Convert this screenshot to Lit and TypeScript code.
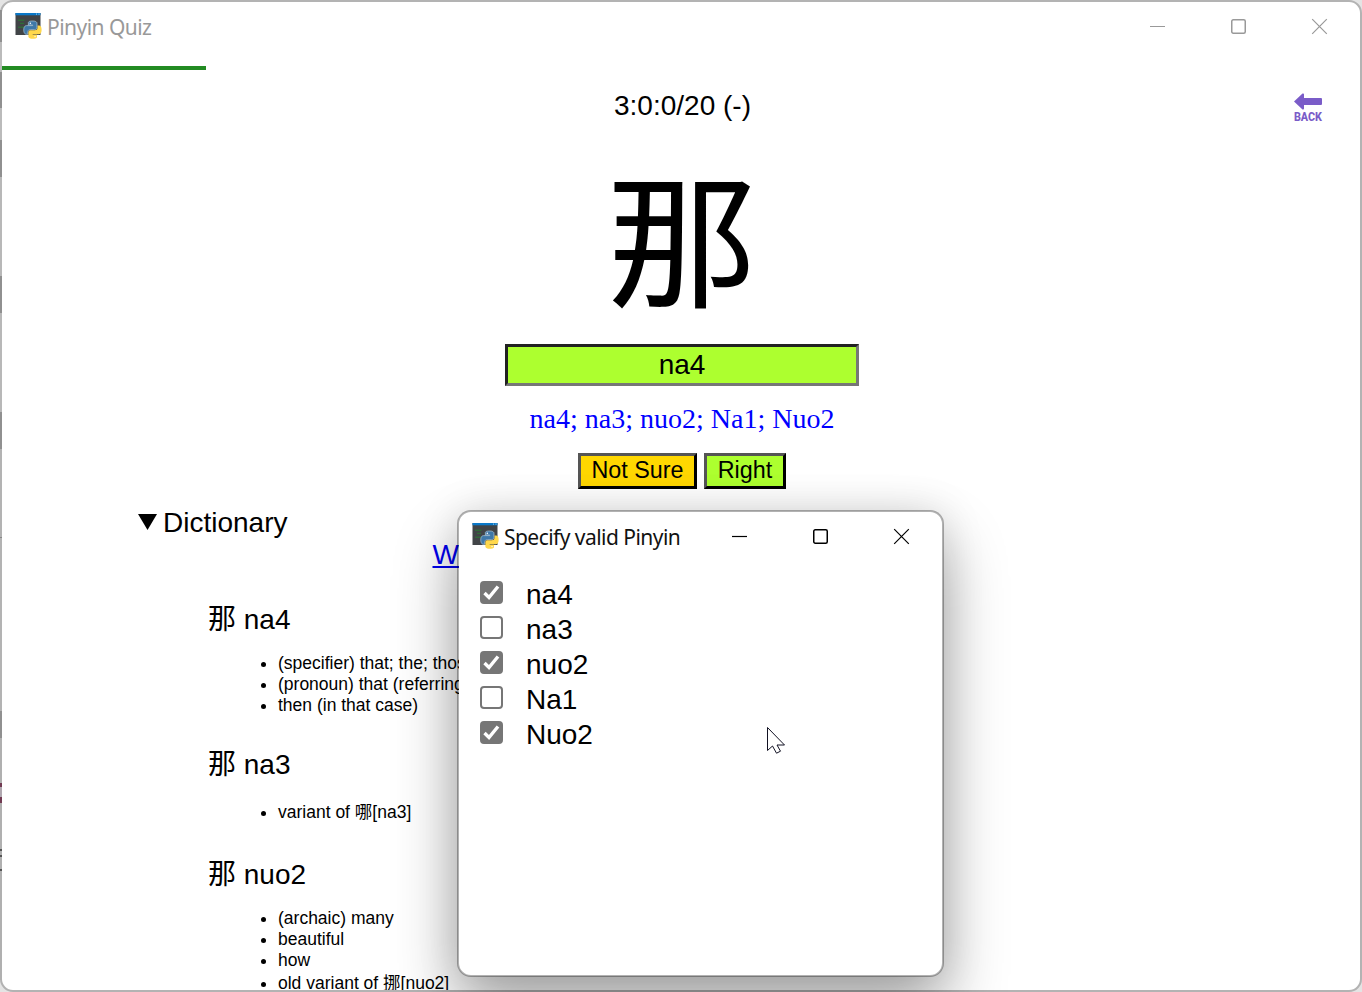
import { LitElement, html, css, svg } from "lit";
import { customElement, property } from "lit/decorators.js";
import { classMap } from "lit/directives/class-map.js";

const snake = "M14.25.18l.9.2.73.26.59.3.45.32.34.34.25.34.16.33.1.3.04.26.02.2-.01.13V8.5l-.05.63-.13.55-.21.46-.26.38-.3.31-.33.25-.35.19-.35.14-.33.1-.3.07-.26.04-.21.02H8.77l-.69.05-.59.14-.5.22-.41.27-.33.32-.27.35-.2.36-.15.37-.1.35-.07.32-.04.27-.02.21v3.06H3.17l-.21-.03-.28-.07-.32-.12-.35-.18-.36-.26-.36-.36-.35-.46-.32-.59-.28-.73-.21-.88-.14-1.05-.05-1.23.06-1.22.16-1.04.24-.87.32-.71.36-.57.4-.44.42-.33.42-.24.4-.16.36-.1.32-.05.24-.01h.16l.06.01h8.16v-.83H6.18l-.01-2.75-.02-.37.05-.34.11-.31.17-.28.25-.26.31-.23.38-.2.44-.18.51-.15.58-.12.64-.1.71-.06.77-.04.84-.02 1.27.05z";

@customElement("python-icon")
class PythonIcon extends LitElement {
  static styles = css`:host { display: block; width: 27px; height: 27px; } svg { display: block; }`;
  render() {
    return html`<svg width="27" height="27" viewBox="0 0 27 27">
      <rect x="0.500" y="0" width="25" height="22" fill="#414447"/>
      <rect x="0.500" y="0" width="25" height="2.300" fill="#0a78c8"/>
      <path d="M21 1.100h1M23.500 1.100h1" stroke="#9fd0f0" stroke-width="1"/>
      <path d="M3 7.200h6.500M5 10.300h4M3 14.200h6.500" stroke="#2b7a33" stroke-width="1"/>
      <g transform="translate(8.800 8) scale(.74)">
        <path d=${snake} fill="#3f78a8" stroke="#a9c4d8" stroke-width="1"/>
        <path d=${snake} fill="#ffd84c" transform="rotate(180 12 12)"/>
        <circle cx="8.800" cy="3" r="1.100" fill="#fff"/><circle cx="15.200" cy="21" r="1.100" fill="#fff7d0"/>
      </g>
    </svg>`;
  }
}

@customElement("window-bar")
class WindowBar extends LitElement {
  @property() label = "";
  @property() tone = "#000";
  @property() ink = "#000";
  static styles = css`
    :host { display: flex; flex: none; align-items: flex-start; height: 52px; box-sizing: border-box; padding: 0 32px 0 13px; }
    python-icon { margin-top: 11px; flex: none; }
    .label { margin: 11px 0 0 5px; flex: 1; font: 21px/28px "Noto Sans", sans-serif; white-space: nowrap; letter-spacing: -0.540px; }
    .controls { display: flex; gap: 64px; margin-top: 16px; }
    svg { display: block; width: 17px; height: 17px; fill: none; stroke-width: 1.200; }
  `;
  render() {
    return html`<python-icon></python-icon><div class="label" style="color:${this.tone}">${this.label}</div>
      <div class="controls" style="color:${this.ink}">
        ${[svg`<path d="M1 8.500h15"/>`, svg`<rect x="1.750" y="1.750" width="13.500" height="13.500" rx="1.500" stroke-width="1.500"/>`, svg`<path d="M1.200 1.200l14.600 14.600M15.800 1.200L1.200 15.800"/>`].map(
          (p) => html`<svg viewBox="0 0 17 17" stroke="currentColor">${p}</svg>`)}
      </div>`;
  }
}

const entries = [
  { head: "na4", cls: "first", items: ["(specifier) that; the; those", "(pronoun) that (referring", "then (in that case)"] },
  { head: "na3", cls: "second", items: ["variant of 哪[na3]"] },
  { head: "nuo2", cls: "third", items: ["(archaic) many", "beautiful", "how", "old variant of 挪[nuo2]"] },
];
const choices: [string, boolean][] = [["na4", true], ["na3", false], ["nuo2", true], ["Na1", false], ["Nuo2", true]];

@customElement("app-root")
class AppRoot extends LitElement {
  static styles = css`
    :host { display: block; position: relative; width: 1362px; height: 992px; overflow: hidden; background: #e4e4e4;
      font-family: "Liberation Sans", "Noto Sans CJK SC", sans-serif; color: #000; }
    * { box-sizing: border-box; }
    .window { width: 1362px; height: 992px; border: 2px solid #b3b3b3; border-radius: 13px; background: #fff; overflow: hidden; display: flex; flex-direction: column; }
    .edge { position: absolute; left: 0; top: 10px; width: 2px; height: 970px;
      background: linear-gradient(#909090 0 32px, #bbb 32px 62px, #909090 62px 98px, #bbb 98px 130px, #909090 130px 167px, #b8b8b8 167px 266px, #909090 266px 303px, #b8b8b8 303px 402px, #909090 402px 439px, #b3b3b3 439px 527px, #888 527px 528px, #b3b3b3 528px 701px, #909090 701px 728px, #b0b0b0 728px 773px, #713a52 773px 777px, #b0a8b0 777px 787px, #713a52 787px 793px, #b0b0b0 793px 839px, #555 839px 841px, #b0b0b0 841px 845px, #555 845px 847px, #b0b0b0 847px 859px, #555 859px 861px, #b0b0b0 861px); }
    .progress { height: 4px; width: 204px; background: #228b22; margin-top: 12px; flex: none; }
    .quiz { display: flex; flex-direction: column; align-items: center; height: 421px; flex: none; padding-left: 2px; }
    .top { display: grid; grid-template-columns: 1fr auto 1fr; align-self: stretch; padding: 20px 36.500px 0 37.500px; height: 62px; flex: none; }
    .score { font-size: 28px; line-height: 32px; }
    .back { justify-self: end; display: flex; flex-direction: column; align-items: center; width: 31px; margin-top: 3px; color: #7a5cc8; }
    .back svg { display: block; flex: none; }
    .back span { font: 800 13px/12px Roboto, sans-serif; margin-top: 1px; transform: scaleX(.83); }
    .glyph { font: 140px/160px "Noto Sans CJK SC", sans-serif; height: 160px; margin-top: 22px; flex: none; transform: scale(1.08, 1.04); }
    .answer { width: 354px; height: 42px; margin-top: 30px; flex: none; border: 3px solid; border-color: #222 #767676 #767676 #222; background: #adff2f; text-align: center; font-size: 28px; line-height: 35px; }
    .valid { color: #00f; font: 28px/32px "Liberation Serif", serif; margin-top: 17px; }
    .buttons { display: flex; gap: 7px; margin-top: 18px; }
    .btn { height: 36px; border: 3px solid; border-color: #555 #000 #000 #555; font-size: 23.333px; line-height: 28px; text-align: center; padding: 0; }
    .unsure { width: 119px; background: #ffd700; } .right { width: 82px; background: #adff2f; }
    .dict { padding-left: 136px; margin-top: 16px; display: flex; flex-direction: column; }
    .summary { display: flex; align-items: center; gap: 6px; font-size: 28px; line-height: 32px; }
    .summary svg { margin-bottom: 2px; }
    .link { color: #00e; text-decoration: underline; font-size: 28px; line-height: 32px; margin-left: 294.500px; }
    .entry { padding-left: 70px; display: flex; flex-direction: column; }
    .head { font-size: 28px; line-height: 38px; height: 38px; white-space: nowrap; }
    .first { margin-top: 30px; } .second { margin-top: 30px; } .third { margin-top: 31px; }
    .defs { list-style: none; margin: 14px 0 0; padding: 0 0 0 53px; font-size: 17.500px; line-height: 21px; }
    .second .defs { margin-top: 16px; } .third .defs { margin-top: 14px; }
    .defs li { display: flex; gap: 12px; align-items: center; height: 21px; white-space: nowrap; }
    .defs li::before { content: ""; width: 5px; height: 5px; border-radius: 50%; background: #000; margin-top: 2px; }
    .second .defs li { height: 25px; } .third .defs li:nth-child(4) { height: 25px; }
    .dialog { position: absolute; left: 457px; top: 510px; width: 487px; height: 467px; border: 2px solid rgba(0,0,0,.3); border-radius: 14px; background: #fff; background-clip: padding-box;
      box-shadow: 0 32px 64px rgba(0,0,0,.33), 0 2px 42px rgba(0,0,0,.13); }
    .choices { display: flex; flex-direction: column; padding: 13px 0 0 21px; }
    .choice { display: flex; height: 35px; gap: 23px; align-items: flex-start; font-size: 28px; line-height: 35px; }
    .box { width: 23px; height: 23px; margin-top: 4px; border: 2px solid #767676; border-radius: 4px; background: #fff; }
    .on { background: #767676; }
    .box svg { display: block; margin: -2px; }
    .cursor { position: absolute; left: 766px; top: 726px; }
  `;
  render() {
    return html`
      <div class="window">
        <window-bar label="Pinyin Quiz" tone="#999" ink="#999"></window-bar>
        <div class="progress"></div>
        <div class="quiz">
          <div class="top">
            <span></span><div class="score">3:0:0/20 (-)</div>
            <div class="back"><svg width="28" height="17" viewBox="0 0 28 17"><path d="M0 8.500L8.500.600Q10 0 10 1.500V5h17q1 0 1 1v5q0 1-1 1H10v3.500Q10 17 8.500 16.400z" fill="currentColor"/></svg><span>BACK</span></div>
          </div>
          <div class="glyph">那</div>
          <div class="answer">na4</div>
          <div class="valid">na4; na3; nuo2; Na1; Nuo2</div>
          <div class="buttons"><div class="btn unsure">Not Sure</div><div class="btn right">Right</div></div>
        </div>
        <div class="dict">
          <div class="summary"><svg width="19" height="16"><path d="M0 0h19L9.500 16z"/></svg>Dictionary</div>
          <div class="link">W</div>
          ${entries.map((e) => html`<div class="entry ${e.cls}"><div class="head">那 ${e.head}</div>
            <ul class="defs">${e.items.map((i) => html`<li>${i}</li>`)}</ul></div>`)}
        </div>
      </div>
      <div class="edge"></div>
      <div class="dialog">
        <window-bar label="Specify valid Pinyin" tone="#111" ink="#000"></window-bar>
        <div class="choices">
          ${choices.map(([name, on]) => html`<div class="choice"><div class=${classMap({ box: true, on })}>
            ${on ? html`<svg width="23" height="23"><path d="M4.500 12l4.500 4.500L18 5.500" fill="none" stroke="#fff" stroke-width="3.400"/></svg>` : ""}</div><span>${name}</span></div>`)}
        </div>
      </div>
      <svg class="cursor" width="20" height="30"><path d="M1.500 1.500v23l5-4.500 4 7.200 4-2-3.500-6.200h7.500z" fill="#fff" stroke="#112" stroke-width="1"/></svg>`;
  }
}
